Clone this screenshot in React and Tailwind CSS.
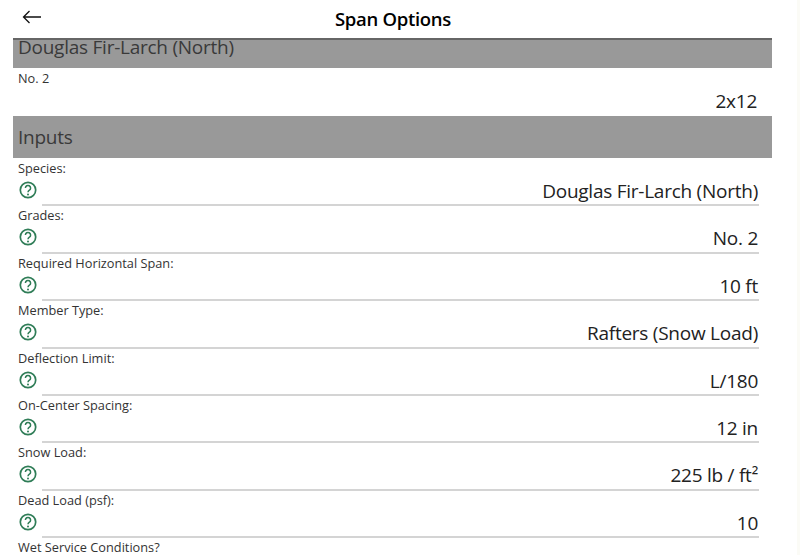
const rows = [
  ["Species:", "Douglas Fir-Larch (North)"],
  ["Grades:", "No. 2"],
  ["Required Horizontal Span:", "10 ft"],
  ["Member Type:", "Rafters (Snow Load)"],
  ["Deflection Limit:", "L/180"],
  ["On-Center Spacing:", "12 in"],
  ["Snow Load:", "225 lb / ft²"],
  ["Dead Load (psf):", "10"],
];

function Help() {
  return (
    <svg width="18" height="18" viewBox="0 0 18 18" fill="none" stroke="#2f7d57" className="shrink-0">
      <circle cx="9" cy="9" r="7.7" strokeWidth="1.7" />
      <path d="M6.4 7a2.6 2.6 0 1 1 4 2.2c-.95.6-1.4 1.05-1.4 2" strokeWidth="1.5" />
      <circle cx="9" cy="13.4" r="1" fill="#2f7d57" stroke="none" />
    </svg>
  );
}

function Row({ label, value }) {
  return (
    <div className="h-[47.4px] flex flex-col pl-[5px]">
      <div className="h-[20px] shrink-0 pt-[3px] text-[12.75px] leading-[15px] text-[#333]">{label}</div>
      <div className="flex h-[28.4px] shrink-0 -mb-px items-start">
        <div className="w-[24px] pl-px pt-[3px]">
          <Help />
        </div>
        <div className="h-[28.4px] w-[717px] border-b-2 border-[#d4d4d4] pr-px text-right text-[19px] leading-[27px] tracking-[-0.25px] text-[#222]">
          {value}
        </div>
      </div>
    </div>
  );
}

export default function App() {
  return (
    <div className="flex h-[555px] w-[800px] overflow-hidden bg-white font-['Open_Sans','Noto_Sans',sans-serif]">
      <div className="w-[797px]">
        <header className="relative flex h-[38px] items-center justify-center pr-[11px]">
          <svg width="20" height="14" viewBox="0 0 20 14" fill="none" stroke="#111" strokeWidth="1.3" className="absolute left-[22px] top-[10px]">
            <path d="M19 7H1.5M7.5 1 1.5 7l6 6" />
          </svg>
          <h1 className="text-[18.5px] font-semibold leading-[38px] tracking-[-0.3px] text-black">Span Options</h1>
        </header>
        <main className="ml-[13px] w-[759px]">
          <div className="h-[30px] border-t-2 border-[#666] bg-[#999] pl-[5px] text-[19px] leading-[15px] tracking-[-0.25px] text-[#3a3a3a]">
            Douglas Fir-Larch (North)
          </div>
          <div className="h-[48px] pl-[5px]">
            <div className="pt-[3px] text-[12.75px] leading-[15px] text-[#333]">No. 2</div>
            <div className="pr-[15px] pt-[2px] text-right text-[19px] leading-[26px] tracking-[-0.25px] text-[#222]">2x12</div>
          </div>
          <div className="h-[42px] bg-[#999] pl-[5px] text-[19px] leading-[42px] tracking-[-0.25px] text-[#3a3a3a]">Inputs</div>
          {rows.map(([l, v]) => (
            <Row key={l} label={l} value={v} />
          ))}
          <div className="pl-[5px] pt-[3px] text-[12.75px] leading-[15px] text-[#333]">Wet Service Conditions?</div>
        </main>
      </div>
      <div className="h-full flex-1 bg-[#fbfbf6]" />
    </div>
  );
}
